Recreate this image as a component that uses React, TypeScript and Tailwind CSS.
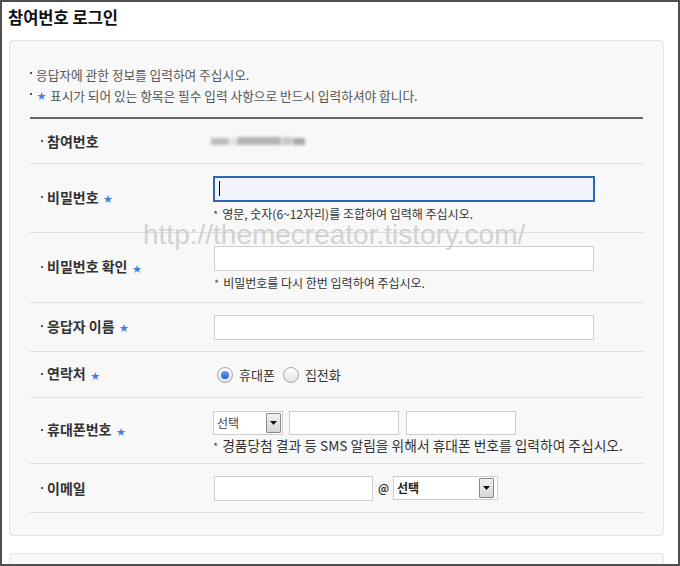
import React from 'react';

const Star = () => <span className="ml-[5px] text-[9px] text-[#3f7fe0] align-middle">★</span>;

const Dot = () => <span className="inline-block w-[2px] h-[2px] bg-[#555] mr-[4px] align-middle relative -top-[2px]" />;

const Label: React.FC<{ text: string; required?: boolean }> = ({ text, required }) => (
  <div className="w-[184px] pl-[11px] shrink-0 text-[14px] font-bold text-[#333] leading-[18px]">
    <Dot />
    {text}
    {required && <Star />}
  </div>
);

const Hint: React.FC<{ children: React.ReactNode; size?: string }> = ({ children, size = 'text-[12px]' }) => (
  <p className={`${size} leading-[16px] text-[#333]`}>
    <span className="text-[11px] text-[#555] mr-[4px]">*</span>
    {children}
  </p>
);

const Arrow = () => (
  <span className="flex items-center justify-center w-[15px] h-[20px] border border-[#888] bg-gradient-to-b from-[#f2f2f2] to-[#d6d6d6] rounded-[1px]">
    <svg width="7" height="4" viewBox="0 0 7 4">
      <path d="M0 0h7L3.5 4z" fill="#111" />
    </svg>
  </span>
);

const Radio: React.FC<{ checked?: boolean }> = ({ checked }) => (
  <span className="flex items-center justify-center w-[16px] h-[16px] rounded-full border border-[#a8a8a8] bg-gradient-to-b from-[#ffffff] to-[#e2e2e2]">
    {checked && <span className="w-[8px] h-[8px] rounded-full bg-gradient-to-b from-[#6aa0f5] to-[#1f5fd8]" />}
  </span>
);

export default function App() {
  const input = 'h-[25px] border border-[#cdcdcd] bg-white';
  return (
    <div className="relative w-[680px] h-[566px] overflow-hidden bg-white border-2 border-[#505050] font-['Noto_Sans_CJK_KR','Noto_Sans',sans-serif]">
      <h1 className="pt-[3px] pl-[6px] text-[16.5px] font-bold leading-[24px] text-[#111]">참여번호 로그인</h1>

      <div className="mt-[11px] ml-[7px] w-[655px] border border-[#e4e4e4] rounded-[4px] bg-[#f8f8f8] pt-[23px] pb-[22px] px-[20px]">
        <ul className="text-[12.7px] leading-[21px] text-[#555]">
          <li className="flex items-center">
            <span className="w-[2px] h-[2px] bg-[#555] mr-[4px] -mt-[4px]" />
            응답자에 관한 정보를 입력하여 주십시오.
          </li>
          <li className="flex items-center">
            <span className="w-[2px] h-[2px] bg-[#555] mr-[4px] -mt-[4px]" />
            <span className="text-[9px] text-[#3f7fe0] ml-[1px] mr-[4px]">★</span>
            표시가 되어 있는 항목은 필수 입력 사항으로 반드시 입력하셔야 합니다.
          </li>
        </ul>

        <div className="mt-[11px] border-t-2 border-[#666]">
          <div className="flex items-center h-[45px] border-b border-[#dedede]">
            <Label text="참여번호" />
            <div className="flex items-center gap-[1px] -ml-[3px] blur-[1.5px]">
              <span className="w-[18px] h-[7px] bg-[#bdbdbd]" />
              <span className="w-[6px] h-[7px] bg-[#e0e0e0]" />
              <span className="w-[44px] h-[8px] bg-[#b5b5b5]" />
              <span className="w-[10px] h-[8px] bg-[#c8c8c8]" />
              <span className="w-[12px] h-[7px] bg-[#a8a8a8]" />
            </div>
          </div>

          <div className="flex items-center h-[69px] border-b border-[#dedede]">
            <Label text="비밀번호" required />
            <div className="flex flex-col gap-[4px] -ml-[1px] pt-[1px]">
              <div className="w-[382px] h-[26px] border-2 border-[#2d66b9] bg-[#f1f4fd] flex items-center pl-[4px]">
                <span className="w-[1px] h-[15px] bg-black" />
              </div>
              <Hint>영문, 숫자(6~12자리)를 조합하여 입력해 주십시오.</Hint>
            </div>
          </div>

          <div className="flex items-center h-[70px] border-b border-[#dedede]">
            <Label text="비밀번호 확인" required />
            <div className="flex flex-col gap-[4px] pt-[1px]">
              <div className={`${input} w-[380px]`} />
              <Hint>비밀번호를 다시 한번 입력하여 주십시오.</Hint>
            </div>
          </div>

          <div className="flex items-center h-[49px] border-b border-[#dedede]">
            <Label text="응답자 이름" required />
            <div className={`${input} w-[380px]`} />
          </div>

          <div className="flex items-center h-[46px] border-b border-[#dedede]">
            <Label text="연락처" required />
            <div className="flex items-center text-[13px] text-[#333] leading-[18px] pl-[3px]">
              <Radio checked />
              <span className="ml-[6px] mr-[8px]">휴대폰</span>
              <Radio />
              <span className="ml-[6px]">집전화</span>
            </div>
          </div>

          <div className="flex items-center h-[66px] border-b border-[#dedede]">
            <Label text="휴대폰번호" required />
            <div className="flex flex-col gap-[2px] -ml-[1px] pt-[4px]">
              <div className="flex items-center">
                <div className="w-[70px] h-[24px] border border-[#cdcdcd] bg-white flex items-center justify-between pl-[3px] pr-[1px]">
                  <span className="text-[12px] text-[#444]">선택</span>
                  <Arrow />
                </div>
                <div className="ml-[6px] w-[110px] h-[24px] border border-[#cdcdcd] bg-white" />
                <div className="ml-[7px] w-[110px] h-[24px] border border-[#cdcdcd] bg-white" />
              </div>
              <Hint size="text-[13.75px]">경품당첨 결과 등 SMS 알림을 위해서 휴대폰 번호를 입력하여 주십시오.</Hint>
            </div>
          </div>

          <div className="flex items-center h-[49px] border-b border-[#dedede]">
            <Label text="이메일" required={false} />
            <div className="flex items-center">
              <div className={`${input} w-[159px]`} />
              <span className="ml-[5px] mr-[4px] text-[11px] font-bold text-[#333]">@</span>
              <div className="w-[105px] h-[24px] border border-[#cdcdcd] bg-white flex items-center justify-between pl-[3px] pr-[3px]">
                <span className="text-[12px] font-bold text-[#222]">선택</span>
                <Arrow />
              </div>
            </div>
          </div>
        </div>
      </div>

      <div className="mt-[17px] ml-[7px] w-[655px] h-[40px] border border-[#e4e4e4] rounded-[4px] bg-[#f8f8f8]" />

      <div className="absolute left-[141px] top-[217px] text-[28px] leading-[32px] text-[#d2d2d2] font-['Liberation_Sans',sans-serif] pointer-events-none">
        http://themecreator.tistory.com/
      </div>
    </div>
  );
}
